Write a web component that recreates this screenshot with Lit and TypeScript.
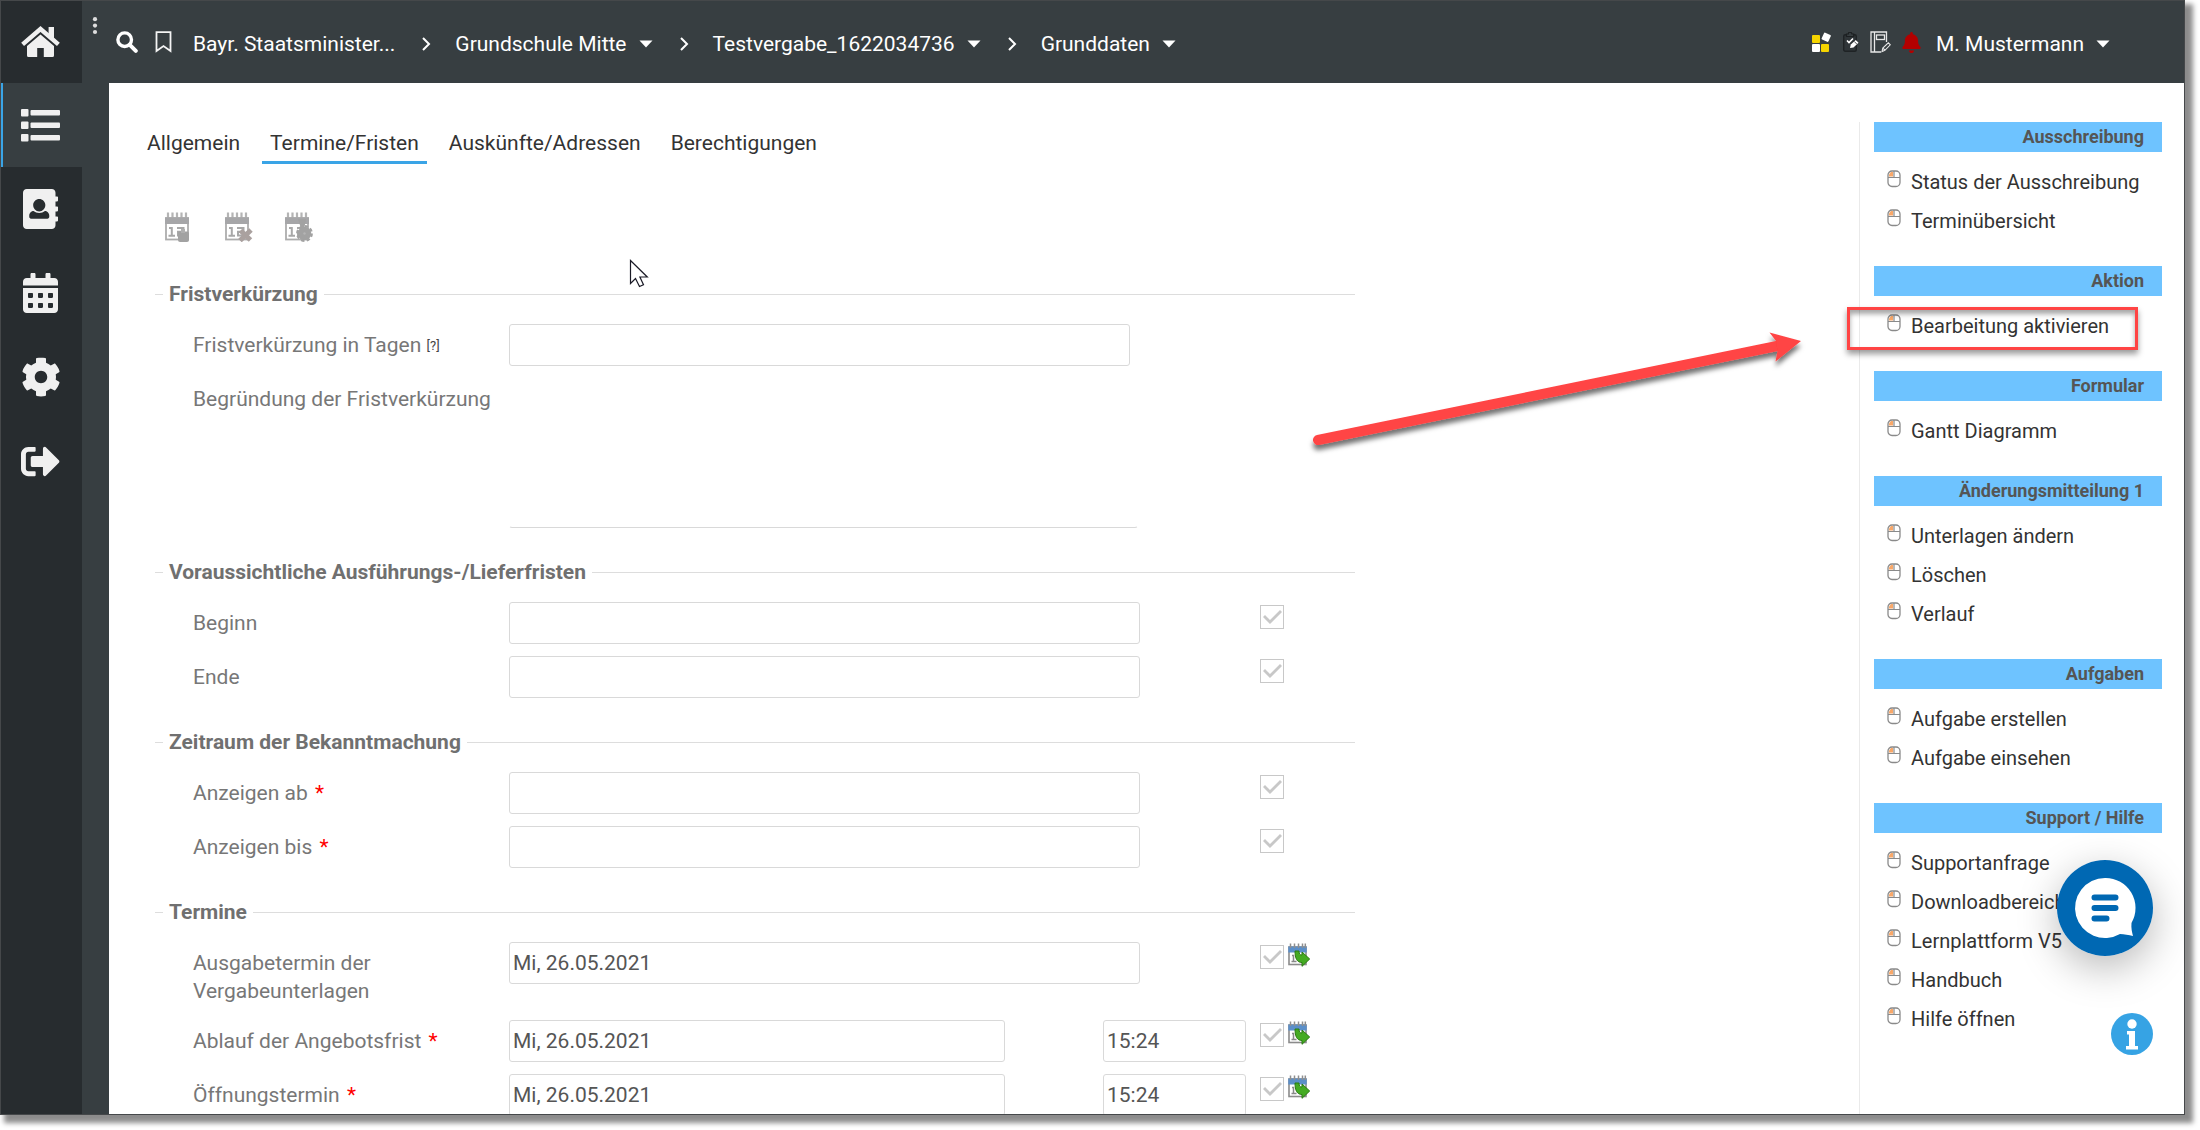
import { LitElement, html, css, svg, nothing } from "lit";
import { customElement } from "lit/decorators.js";
import { classMap } from "lit/directives/class-map.js";

interface NavItem {
  name: string;
  box: string;
  width: number;
  height: number;
  art: unknown;
  active?: boolean;
}

interface Row {
  id: string;
  label: string;
  required?: boolean;
  help?: boolean;
  kind: "short" | "wide" | "area" | "datetime";
  value?: string;
  time?: string;
  check?: boolean;
  transfer?: boolean;
}

interface Section {
  title: string;
  rows: Row[];
}

const NAV: NavItem[] = [
  {
    name: "Startseite",
    box: "0 0 39 32",
    width: 39,
    height: 32,
    art: svg`<path d="M1.600 18.300 19.500 3 37.400 18.300" fill="none" stroke="currentColor" stroke-width="4.400"/><path d="M27.600 1h5.400v14l-5.400-5z"/><path d="M19.500 8.400 33 20v9.500a1.500 1.500 0 0 1-1.500 1.500h-8.700v-9h-6.600v9H7.500A1.500 1.500 0 0 1 6 29.500V20z"/>`,
  },
  {
    name: "Liste",
    box: "0 0 39 33",
    width: 39,
    height: 33,
    active: true,
    art: svg`<rect x="0" y="0" width="7.500" height="7.500" rx="1"/><rect x="0" y="12.500" width="7.500" height="7.500" rx="1"/><rect x="0" y="25" width="7.500" height="7.500" rx="1"/><rect x="9.500" y="1" width="29.500" height="5.500" rx="1"/><rect x="9.500" y="13.500" width="29.500" height="5.500" rx="1"/><rect x="9.500" y="26" width="29.500" height="5.500" rx="1"/>`,
  },
  {
    name: "Adressbuch",
    box: "0 0 448 512",
    width: 35,
    height: 40,
    art: svg`<path d="M436 160c6.600 0 12-5.400 12-12v-40c0-6.600-5.400-12-12-12h-20V48c0-26.500-21.500-48-48-48H48C21.500 0 0 21.500 0 48v416c0 26.500 21.500 48 48 48h320c26.500 0 48-21.500 48-48v-48h20c6.600 0 12-5.400 12-12v-40c0-6.600-5.400-12-12-12h-20v-64h20c6.600 0 12-5.400 12-12v-40c0-6.600-5.400-12-12-12h-20v-64h20zm-228-32c41 0 78 34 78 78s-34 82-78 82-78-38-78-82 37-78 78-78zm128 228c0 14-10 24-22 24H102c-12 0-22-10-22-24v-16c0-32 30-58 55-58 20 16 45 24 73 24s53-8 73-24c25 0 55 26 55 58v16z"/>`,
  },
  {
    name: "Kalender",
    box: "0 0 448 512",
    width: 35,
    height: 40,
    art: svg`<path d="M0 464c0 26.500 21.500 48 48 48h352c26.500 0 48-21.500 48-48V192H0v272zm320-196c0-6.600 5.400-12 12-12h40c6.600 0 12 5.400 12 12v40c0 6.600-5.400 12-12 12h-40c-6.600 0-12-5.400-12-12v-40zm0 128c0-6.600 5.400-12 12-12h40c6.600 0 12 5.400 12 12v40c0 6.600-5.400 12-12 12h-40c-6.600 0-12-5.400-12-12v-40zM192 268c0-6.600 5.400-12 12-12h40c6.600 0 12 5.400 12 12v40c0 6.600-5.400 12-12 12h-40c-6.600 0-12-5.400-12-12v-40zm0 128c0-6.600 5.400-12 12-12h40c6.600 0 12 5.400 12 12v40c0 6.600-5.400 12-12 12h-40c-6.600 0-12-5.400-12-12v-40zM64 268c0-6.600 5.400-12 12-12h40c6.600 0 12 5.400 12 12v40c0 6.600-5.400 12-12 12H76c-6.600 0-12-5.400-12-12v-40zm0 128c0-6.600 5.400-12 12-12h40c6.600 0 12 5.400 12 12v40c0 6.600-5.400 12-12 12H76c-6.600 0-12-5.400-12-12v-40zM400 64h-48V16c0-8.800-7.200-16-16-16h-32c-8.800 0-16 7.200-16 16v48H160V16c0-8.800-7.200-16-16-16h-32c-8.800 0-16 7.200-16 16v48H48C21.500 64 0 85.500 0 112v48h448v-48c0-26.500-21.500-48-48-48z"/>`,
  },
  {
    name: "Einstellungen",
    box: "0 0 512 512",
    width: 40,
    height: 40,
    art: svg`<path d="M487.400 315.700l-42.600-24.600c4.300-23.200 4.300-47 0-70.200l42.600-24.600c4.900-2.800 7.100-8.600 5.500-14-11.100-35.600-30-67.800-54.700-94.600-3.800-4.100-10-5.100-14.800-2.300L380.800 110c-17.900-15.400-38.500-27.300-60.800-35.100V25.800c0-5.600-3.900-10.500-9.400-11.700-36.700-8.200-74.300-7.800-109.200 0-5.500 1.200-9.400 6.100-9.400 11.700V75c-22.200 7.900-42.800 19.800-60.800 35.100L88.700 85.500c-4.900-2.800-11-1.900-14.800 2.300-24.700 26.700-43.600 58.900-54.700 94.600-1.700 5.400.6 11.200 5.500 14L67.300 221c-4.300 23.200-4.300 47 0 70.200l-42.600 24.600c-4.900 2.800-7.100 8.600-5.500 14 11.100 35.600 30 67.800 54.700 94.600 3.800 4.100 10 5.100 14.800 2.300l42.600-24.600c17.900 15.400 38.500 27.300 60.800 35.100v49.200c0 5.600 3.900 10.500 9.400 11.700 36.700 8.200 74.300 7.800 109.200 0 5.500-1.200 9.400-6.100 9.400-11.700v-49.200c22.200-7.900 42.800-19.800 60.800-35.100l42.600 24.600c4.900 2.800 11 1.900 14.800-2.300 24.700-26.700 43.600-58.900 54.700-94.600 1.500-5.500-.7-11.300-5.600-14.100zM256 336c-44.100 0-80-35.900-80-80s35.900-80 80-80 80 35.900 80 80-35.900 80-80 80z"/>`,
  },
  {
    name: "Abmelden",
    box: "0 0 512 512",
    width: 39,
    height: 39,
    art: svg`<path d="M497 273L329 441c-15 15-41 4.500-41-17v-96H152c-13.300 0-24-10.700-24-24v-96c0-13.300 10.700-24 24-24h136V88c0-21.400 25.900-32 41-17l168 168c9.300 9.400 9.300 24.600 0 34zM192 436v-40c0-6.600-5.400-12-12-12H96c-17.700 0-32-14.300-32-32V160c0-17.700 14.300-32 32-32h84c6.600 0 12-5.400 12-12V76c0-6.600-5.400-12-12-12H96c-53 0-96 43-96 96v192c0 53 43 96 96 96h84c6.600 0 12-5.400 12-12z"/>`,
  },
];

const CRUMBS = [
  { text: "Bayr. Staatsminister...", menu: false },
  { text: "Grundschule Mitte", menu: true },
  { text: "Testvergabe_1622034736", menu: true },
  { text: "Grunddaten", menu: true },
];

const TABS = ["Allgemein", "Termine/Fristen", "Auskünfte/Adressen", "Berechtigungen"];

const DAY = "Mi, 26.05.2021";

const SECTIONS: Section[] = [
  {
    title: "Fristverkürzung",
    rows: [
      { id: "tage", label: "Fristverkürzung in Tagen", help: true, kind: "short" },
      { id: "grund", label: "Begründung der Fristverkürzung", kind: "area" },
    ],
  },
  {
    title: "Voraussichtliche Ausführungs-/Lieferfristen",
    rows: [
      { id: "beginn", label: "Beginn", kind: "wide", check: true },
      { id: "ende", label: "Ende", kind: "wide", check: true },
    ],
  },
  {
    title: "Zeitraum der Bekanntmachung",
    rows: [
      { id: "ab", label: "Anzeigen ab", required: true, kind: "wide", check: true },
      { id: "bis", label: "Anzeigen bis", required: true, kind: "wide", check: true },
    ],
  },
  {
    title: "Termine",
    rows: [
      { id: "ausgabe", label: "Ausgabetermin der Vergabeunterlagen", kind: "wide", value: DAY, check: true, transfer: true },
      { id: "ablauf", label: "Ablauf der Angebotsfrist", required: true, kind: "datetime", value: DAY, time: "15:24", check: true, transfer: true },
      { id: "oeffnung", label: "Öffnungstermin", required: true, kind: "datetime", value: DAY, time: "15:24", check: true, transfer: true },
    ],
  },
];

const ACTIONS = [
  { title: "Ausschreibung", items: ["Status der Ausschreibung", "Terminübersicht"] },
  { title: "Aktion", items: ["Bearbeitung aktivieren"] },
  { title: "Formular", items: ["Gantt Diagramm"] },
  { title: "Änderungsmitteilung 1", items: ["Unterlagen ändern", "Löschen", "Verlauf"] },
  { title: "Aufgaben", items: ["Aufgabe erstellen", "Aufgabe einsehen"] },
  { title: "Support / Hilfe", items: ["Supportanfrage", "Downloadbereich", "Lernplattform V5", "Handbuch", "Hilfe öffnen"] },
];

const HIGHLIGHTED = "Bearbeitung aktivieren";

const caret = html`<svg class="caret" width="14" height="8" viewBox="0 0 14 8" aria-hidden="true"><path d="M.5.500h13L7 7.500z" fill="#fff"/></svg>`;

const mouse = html`<svg class="mouse" width="14" height="18" viewBox="0 0 14 18" aria-hidden="true">
  <path d="M2 4.500 4 2h2v4.500H2z" fill="#f9a869"/>
  <rect x="1" y="1" width="12" height="15.500" rx="4" fill="none" stroke="#8a8a8a" stroke-width="1.300"/>
  <path d="M1 7.500h12M7 1v6.500" stroke="#8a8a8a" stroke-width="1.200"/>
</svg>`;

const calendarGrey = (badge: unknown) => html`<svg width="28" height="30" viewBox="0 0 28 30" aria-hidden="true">
  <path d="M3 6V.5M7.500 6V.5M12 6V.5M16.500 6V.5M21 6V.5" stroke="#b4b4b4" stroke-width="2.200"/>
  <rect x="1" y="6" width="22" height="21.500" fill="#fff" stroke="#adadad" stroke-width="1.800"/>
  <path d="M0 5.500h24V12H0z" fill="#a6a6a8"/>
  <path d="M4 16h2.800v7.500M3.500 23.800h6.500M12 16h6.500v3.800H13v3.700h7" fill="none" stroke="#a8a8a8" stroke-width="2"/>
  ${badge}
</svg>`;

const TOOLS = [
  { name: "Termin festlegen", art: svg`<rect x="13" y="19.500" width="11" height="10.500" rx="2" fill="#a2a2a2"/><path d="M16 17h4v4h-4z" fill="#b0b0b0"/>` },
  { name: "Termin löschen", art: svg`<path d="m15.500 18.500 10 9.500M26 18 15 28.500" stroke="#aaa19f" stroke-width="5"/>` },
  { name: "Termin einstellen", art: svg`<circle cx="19.500" cy="21.500" r="6.800" fill="#a2a2a2"/><circle cx="19.500" cy="21.500" r="7.300" fill="none" stroke="#a2a2a2" stroke-width="2.200" stroke-dasharray="3.400 2.333"/><circle cx="19.500" cy="21.500" r="1.200" fill="#b4b4b4"/><path d="M13 7h8l-1.500 8h-4z" fill="#a2a2a2"/>` },
];

const calendarArrow = html`<svg width="22" height="24" viewBox="0 0 22 24" aria-hidden="true">
  <rect x="1" y="4" width="17" height="17.500" fill="#fff" stroke="#8b8b8b" stroke-width="1.600"/>
  <path d="M.3 3.500h18.400v6H.3z" fill="#5b8fc9"/>
  <path d="M2.500 5V.5M6.500 5V.5M10.500 5V.5M14.500 5V.5M17.300 5V.5" stroke="#8f8f8f" stroke-width="1.500"/>
  <path d="M4 12.500h1.500V18M3.500 18.500h5" fill="none" stroke="#888" stroke-width="1.500"/>
  <path d="M7 8h4c0 3 .8 4 3 4V9l7.700 7-7.700 7.300V19.500c-5 0-7-4-7-11.500z" fill="#44ab22" stroke="#2a7a12" stroke-width="1"/>
</svg>`;

@customElement("app-root")
export class AppRoot extends LitElement {
  static styles = css`
    :host {
      display: block;
      box-sizing: border-box;
      height: 100vh;
      padding: 0 15px 15px 0;
      overflow: hidden;
      background: #fff;
      color: #333;
      font: 21px/28px Roboto, "Liberation Sans", sans-serif;
    }
    *,
    *::before,
    *::after {
      box-sizing: border-box;
    }
    svg {
      display: block;
      flex: none;
    }
    button {
      margin: 0;
      padding: 0;
      border: 0;
      background: none;
      color: inherit;
      font: inherit;
      cursor: pointer;
    }
    a {
      color: inherit;
      text-decoration: none;
    }
    ul {
      margin: 0;
      padding: 0;
      list-style: none;
    }
    .window {
      position: relative;
      display: grid;
      grid-template-columns: 81px 27px minmax(0, 1fr);
      grid-template-rows: 82px minmax(0, 1fr);
      height: 100%;
      border: 1px solid #45484a;
      background: #373e41;
      box-shadow: 6px 6px 5px 2px rgba(0, 0, 0, 0.45);
      clip-path: inset(0 -15px -15px 0);
    }
    .nav {
      grid-row: 1 / 3;
      background: #272c2f;
      color: #f0f0f0;
    }
    .nav a {
      display: flex;
      align-items: center;
      justify-content: center;
      height: 84px;
      border-left: 2px solid transparent;
      padding-right: 4px;
    }
    .nav a.active {
      border-color: #3aa4e6;
      background: #373e41;
    }
    .nav li:first-child a {
      height: 82px;
    }
    .nav svg,
    .bell {
      fill: currentColor;
    }
    .dots {
      grid-row: 1 / 3;
      padding: 16px 0 0 10px;
    }
    .bar {
      display: flex;
      align-items: center;
      justify-content: space-between;
      padding: 0 74px 0 7px;
      color: #fff;
    }
    .trail,
    .trail ol,
    .trail li,
    .crumb,
    .user,
    .right,
    .icons {
      display: flex;
      align-items: center;
    }
    .trail ol {
      margin: 0;
      padding: 3px 0 0;
      list-style: none;
    }
    .trail .mark {
      margin: 0 21px 0 17px;
    }
    .crumb,
    .user {
      gap: 12px;
      white-space: nowrap;
    }
    .sep {
      margin: 0 24px 0 26px;
    }
    .icons {
      gap: 11px;
      margin-right: 15px;
    }
    .user {
      padding-top: 3px;
    }
    .body {
      display: grid;
      grid-template-columns: minmax(0, 1fr) 325px;
      overflow: hidden;
      background: #fff;
    }
    .main {
      padding: 44px 46px 0;
      overflow: hidden;
    }
    .tabs {
      display: flex;
      gap: 14px;
      margin-left: -16px;
    }
    .tabs a {
      padding: 2px 8px 4px;
      border-bottom: 3px solid transparent;
    }
    .tabs a.current {
      border-color: #3aa4e6;
    }
    .tools {
      display: flex;
      gap: 32px;
      margin: 48px 0 38px 10px;
    }
    fieldset {
      max-width: 1200px;
      margin: 0 0 18px;
      padding: 16px 0 0;
      border: 0;
      border-top: 1px solid #ddd;
      min-width: 0;
    }
    legend {
      margin-left: 8px;
      padding: 0 6px;
      color: #707070;
      font-weight: 700;
    }
    .row {
      display: grid;
      grid-template-columns: 316px minmax(0, 1fr) 95px;
      margin-bottom: 12px;
      padding-left: 38px;
    }
    .label {
      padding: 7px 0 3px;
      color: #777;
    }
    .help {
      color: #444;
      font-size: 13px;
      line-height: 13px;
      vertical-align: 2px;
    }
    .req {
      margin-left: 2px;
      color: #f00;
    }
    .fields {
      display: flex;
      justify-content: space-between;
      align-items: flex-start;
      padding-right: 14px;
    }
    .fields input,
    textarea {
      display: block;
      height: 42px;
      margin: 0;
      padding: 0 3px;
      border: 1px solid #d9d9d9;
      border-radius: 3px;
      background: #fff;
      color: #555;
      font: inherit;
      outline: none;
    }
    .fields .short {
      width: 621px;
    }
    .fields .wide {
      width: 631px;
    }
    .fields .date {
      width: 496px;
    }
    .fields .time {
      width: 143px;
    }
    textarea {
      width: 629px;
      height: 150px;
      resize: none;
      border-color: transparent transparent #d9d9d9;
    }
    .side {
      display: flex;
      align-items: flex-start;
      gap: 4px;
      padding-top: 3px;
    }
    .side input {
      display: block;
      appearance: none;
      width: 24px;
      height: 24px;
      margin: 0;
      border: 1px solid #c8c8c8;
      background: #fff;
    }
    .side input:checked::after {
      content: "";
      display: block;
      width: 22px;
      height: 22px;
      background: #c8c8c8;
      clip-path: polygon(2px 11px, 4px 9px, 9px 14px, 19px 4px, 21px 6px, 9px 18px);
    }
    .side button {
      margin-top: -2px;
    }
    .actions {
      margin-top: 39px;
      padding: 0 22px 0 14px;
      border-left: 1px solid #eaeaea;
      font-size: 20px;
    }
    .actions h2 {
      margin: 0 0 10px;
      padding-right: 18px;
      background: #6ec3ff;
      color: #555;
      font-size: 18px;
      line-height: 30px;
      text-align: right;
    }
    .actions ul {
      margin-bottom: 26px;
    }
    .actions li {
      position: relative;
    }
    .actions a {
      display: flex;
      align-items: center;
      gap: 10px;
      height: 39px;
      padding-left: 13px;
      white-space: nowrap;
    }
    .mouse {
      margin-bottom: 5px;
    }
    .marked::after {
      content: "";
      position: absolute;
      top: 1px;
      right: 24px;
      bottom: -5px;
      left: -27px;
      border: 3px solid #ff4444;
      box-shadow: 0 4px 6px rgba(0, 0, 0, 0.4), inset 0 4px 5px rgba(0, 0, 0, 0.35);
      pointer-events: none;
    }
    .arrow,
    .cursor,
    .chat,
    .info {
      position: absolute;
    }
    .arrow {
      top: 320px;
      right: 373px;
      pointer-events: none;
    }
    .cursor {
      top: 258px;
      left: 628px;
      pointer-events: none;
    }
    .chat {
      right: 31px;
      bottom: 158px;
      border-radius: 50%;
      box-shadow: 0 12px 40px rgba(0, 0, 0, 0.28);
    }
    .info {
      right: 31px;
      bottom: 59px;
    }
  `;

  private renderField(row: Row) {
    switch (row.kind) {
      case "area":
        return html`<textarea id=${row.id}></textarea>`;
      case "datetime":
        return html`<input class="date" id=${row.id} type="text" .value=${row.value ?? ""} />
          <input class="time" type="text" aria-label="${row.label} Uhrzeit" .value=${row.time ?? ""} />`;
      default:
        return html`<input class=${row.kind} id=${row.id} type="text" .value=${row.value ?? ""} />`;
    }
  }

  private renderRow(row: Row) {
    return html`<div class="row">
      <label class="label" for=${row.id}
        >${row.label}${row.help ? html` <span class="help">[?]</span>` : nothing}${row.required
          ? html` <span class="req">*</span>`
          : nothing}</label
      >
      <div class="fields">${this.renderField(row)}</div>
      <div class="side">
        ${row.check ? html`<input type="checkbox" aria-label="${row.label} anzeigen" checked disabled />` : nothing}
        ${row.transfer ? html`<button aria-label="${row.label} übernehmen">${calendarArrow}</button>` : nothing}
      </div>
    </div>`;
  }

  private renderBar() {
    return html`<header class="bar">
      <nav class="trail" aria-label="Pfad">
        <button aria-label="Suche">
          <svg width="22" height="22" viewBox="0 0 22 22">
            <circle cx="8.700" cy="8.700" r="6.800" fill="none" stroke="#fff" stroke-width="3.400" />
            <path d="m13.800 13.800 6 6" stroke="#fff" stroke-width="4" stroke-linecap="round" />
          </svg>
        </button>
        <button class="mark" aria-label="Merken">
          <svg width="17" height="22" viewBox="0 0 17 22">
            <path d="M1.500 1.200h14v18.800l-7-5-7 5z" fill="none" stroke="#f4f4f4" stroke-width="1.800" />
          </svg>
        </button>
        <ol>
          ${CRUMBS.map(
            (crumb, i) => html`<li>
              ${i > 0
                ? html`<svg class="sep" width="10" height="14" viewBox="0 0 10 14" aria-hidden="true">
                    <path d="m2 1 6 6-6 6" fill="none" stroke="#fff" stroke-width="2" />
                  </svg>`
                : nothing}
              <button class="crumb">${crumb.text}${crumb.menu ? caret : nothing}</button>
            </li>`
          )}
        </ol>
      </nav>
      <div class="right">
        <div class="icons">
          <button aria-label="Module">
            <svg width="20" height="20" viewBox="0 0 20 20">
              <rect x="0" y="3" width="8" height="8" rx="1" fill="#f5d400" />
              <rect x="0" y="12" width="8" height="8" rx="1" fill="#fff" />
              <rect x="9" y="12" width="8" height="8" rx="1" fill="#f5d400" />
              <rect x="10.500" y="1.500" width="7.500" height="7.500" rx="1" fill="#fff" transform="rotate(25 14.200 5.200)" />
            </svg>
          </button>
          <button aria-label="Aufgaben">
            <svg width="16" height="20" viewBox="0 0 16 20">
              <rect x=".7" y="2.700" width="12.600" height="16.600" rx="1.500" fill="#2f3538" stroke="#1f2325" stroke-width="1.400" />
              <path d="M3.500 4.500V2h1.800a1.800 1.800 0 0 1 3.600 0h1.800v2.500z" fill="#373e41" stroke="#1c1f21" stroke-width="1.200" />
              <path d="m4 8.500 2 2L10 6.500" fill="none" stroke="#fff" stroke-width="1.600" />
              <path d="m7 16 .8-3.500 5-4.500 2.700 2.800-5 4.700z" fill="#fff" />
              <path d="m11.200 9.400 2.700 2.800" stroke="#2b2f32" stroke-width=".8" />
            </svg>
          </button>
          <button aria-label="Notizen">
            <svg width="21" height="22" viewBox="0 0 21 22" fill="none" stroke="#e8e8e8">
              <path d="M16.500 11V1H1v20h10M4.500 1v20" stroke-width="1.300" />
              <rect x="6.500" y="4" width="8" height="4.500" stroke-width="1.300" />
              <path d="m12 20.500.8-3.500 5.500-5.200 2 2-5.400 5.500zM12.800 17l2.100 2.200" stroke-width="1.100" />
            </svg>
          </button>
          <button aria-label="Meldungen">
            <svg class="bell" width="19" height="21" viewBox="0 0 448 512" color="#b30000">
              <path
                d="M224 512c35.300 0 64-28.600 64-64H160c0 35.400 28.700 64 64 64zm215.400-149.700c-19.300-20.800-55.500-52-55.500-154.300 0-77.700-54.500-139.900-127.900-155.200V32c0-17.700-14.300-32-32-32s-32 14.300-32 32v20.800C118.600 68.100 64.100 130.300 64.100 208c0 102.300-36.200 133.500-55.500 154.300-6 6.400-8.700 14.200-8.600 21.700.1 16.400 13 32 32.100 32h383.800c19.100 0 32-15.600 32.100-32 .1-7.500-2.600-15.300-8.600-21.700z"
              />
            </svg>
          </button>
        </div>
        <button class="user">M. Mustermann${caret}</button>
      </div>
    </header>`;
  }

  render() {
    return html`<div class="window">
      <nav class="nav" aria-label="Hauptmenü">
        <ul>
          ${NAV.map(
            (item) => html`<li>
              <a href="#" class=${classMap({ active: !!item.active })} aria-label=${item.name}>
                <svg width=${item.width} height=${item.height} viewBox=${item.box}>${item.art}</svg>
              </a>
            </li>`
          )}
        </ul>
      </nav>
      <div class="dots">
        <svg width="6" height="18" viewBox="0 0 6 18" fill="#dedede" aria-hidden="true">
          <circle cx="3" cy="2.200" r="2.100" /><circle cx="3" cy="8.600" r="2.100" /><circle cx="3" cy="15" r="2.100" />
        </svg>
      </div>
      ${this.renderBar()}
      <div class="body">
        <main class="main">
          <nav class="tabs" aria-label="Reiter">
            ${TABS.map((tab, i) => html`<a href="#" class=${classMap({ current: i === 1 })}>${tab}</a>`)}
          </nav>
          <div class="tools">
            ${TOOLS.map((tool) => html`<button aria-label=${tool.name}>${calendarGrey(tool.art)}</button>`)}
          </div>
          ${SECTIONS.map(
            (section) => html`<fieldset>
              <legend>${section.title}</legend>
              ${section.rows.map((row) => this.renderRow(row))}
            </fieldset>`
          )}
        </main>
        <aside class="actions">
          ${ACTIONS.map(
            (group) => html`<h2>${group.title}</h2>
              <ul>
                ${group.items.map(
                  (item) => html`<li class=${classMap({ marked: item === HIGHLIGHTED })}>
                    <a href="#">${mouse}<span>${item}</span></a>
                  </li>`
                )}
              </ul>`
          )}
        </aside>
      </div>
      <svg class="arrow" width="510" height="150" viewBox="0 0 510 150" aria-hidden="true">
        <defs>
          <filter id="soft" x="-10%" y="-20%" width="120%" height="150%">
            <feDropShadow dx="0" dy="5" stdDeviation="2.500" flood-color="#000" flood-opacity=".55" />
          </filter>
        </defs>
        <g filter="url(#soft)" fill="#ff4444">
          <path d="M17 119 476 25" stroke="#ff4444" stroke-width="10" stroke-linecap="round" />
          <path d="M500 20 468.500 11.500 475 20 476.500 30 474.500 40.500z" />
        </g>
      </svg>
      <svg class="cursor" width="20" height="30" viewBox="0 0 20 30" aria-hidden="true">
        <path d="M1.500 1.500v23l5-5 4 8 4-1.800-3.600-7.700h7.400z" fill="#fff" stroke="#1a1a26" stroke-width="1.200" />
      </svg>
      <button class="chat" aria-label="Chat">
        <svg width="96" height="96" viewBox="0 0 96 96">
          <circle cx="48" cy="48" r="48" fill="#0068b3" />
          <path d="M48 18a30 30 0 1 0 15 56c4 0 9 1 13 2-1-4-2-8-1.500-13A30 30 0 0 0 48 18z" fill="#fff" />
          <path d="M37.500 37.500h21M37.500 48h21M37.500 58.500h12" stroke="#0068b3" stroke-width="6" stroke-linecap="round" />
        </svg>
      </button>
      <button class="info" aria-label="Information">
        <svg width="42" height="42" viewBox="0 0 42 42">
          <circle cx="21" cy="21" r="21" fill="#36a3e4" />
          <circle cx="21" cy="11" r="4.700" fill="#fff" />
          <path d="M16 18h8v15h3v3.500H15V33h3V21.500h-2z" fill="#fff" />
        </svg>
      </button>
    </div>`;
  }
}
